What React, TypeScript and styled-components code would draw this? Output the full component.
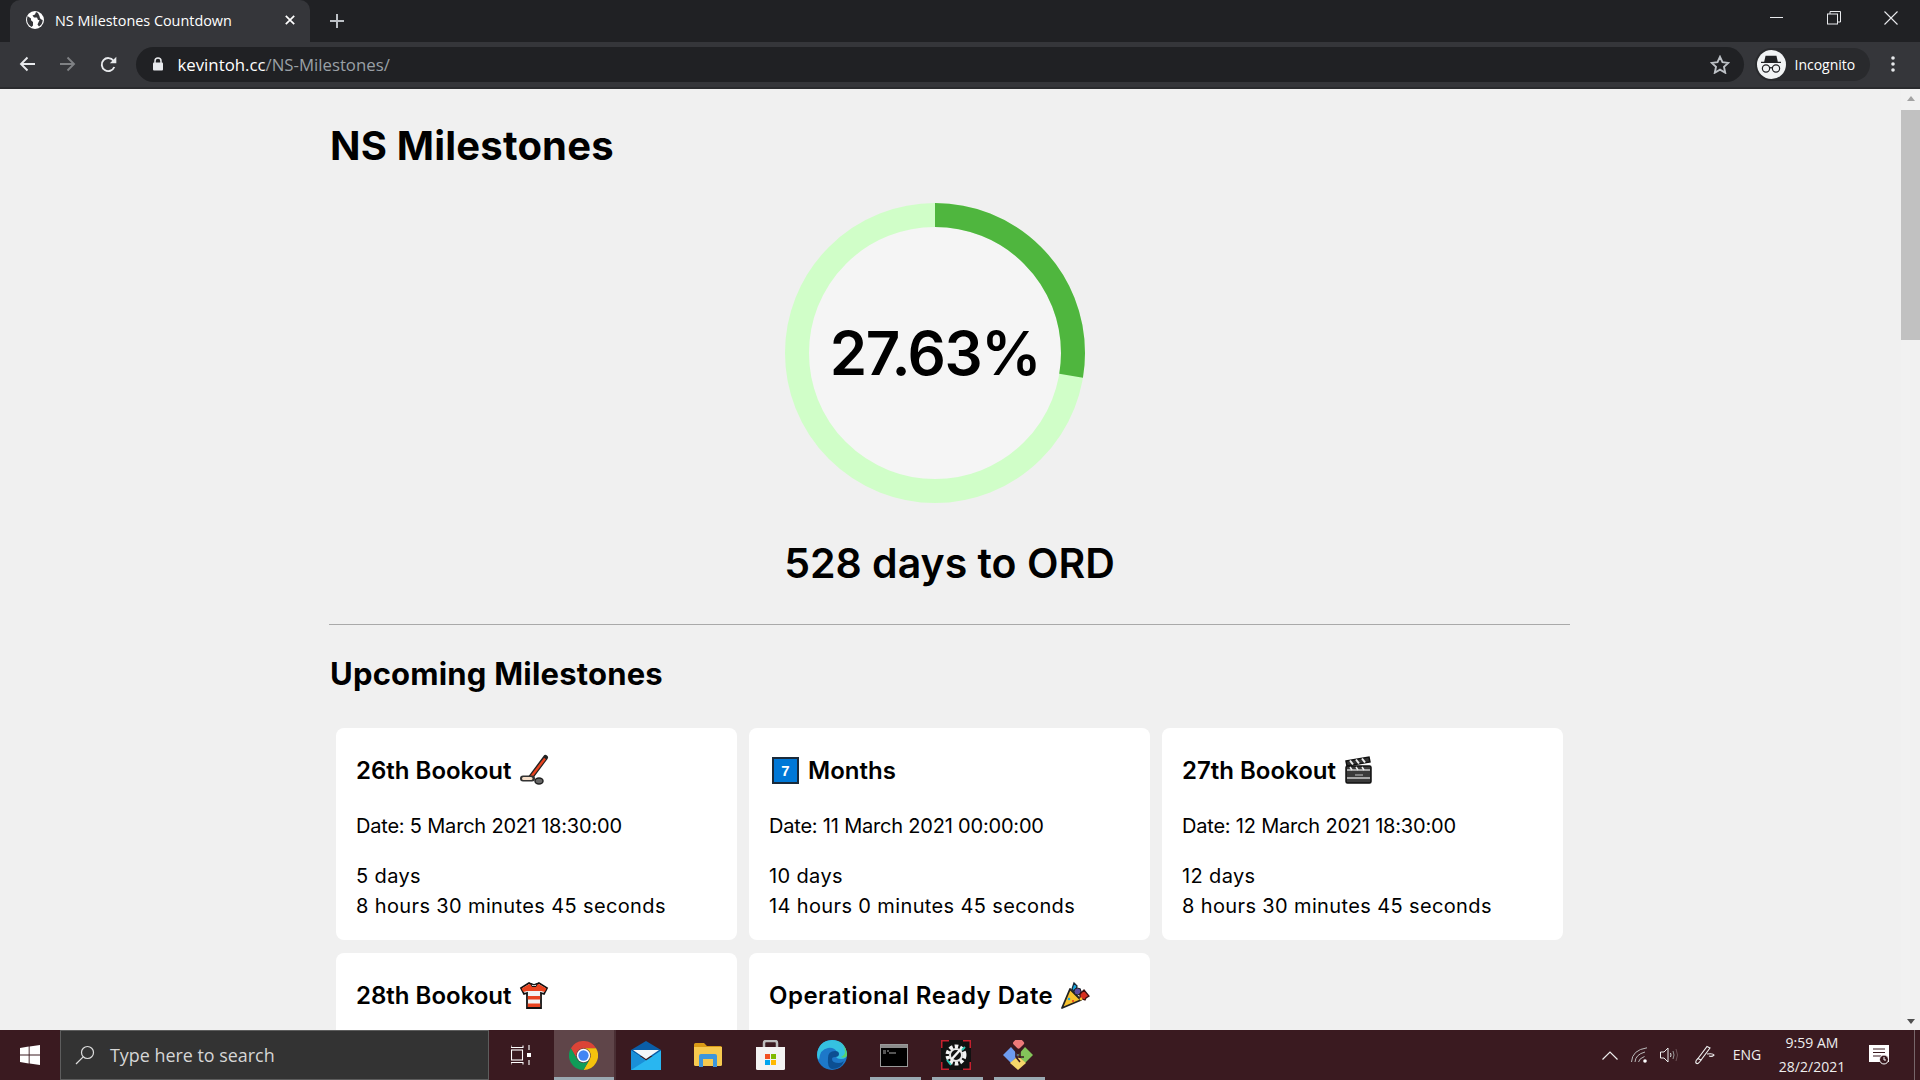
import React from "react";
import styled, { createGlobalStyle } from "styled-components";

const GlobalStyle = createGlobalStyle`
  html, body {
    margin: 0;
    height: 100%;
    overflow: hidden;
    background: #f0f0f0;
  }
  * { box-sizing: border-box; }
`;

const Screen = styled.div`
  width: 1920px;
  height: 1080px;
  display: flex;
  flex-direction: column;
  overflow: hidden;
  font-family: "Inter", "Liberation Sans", sans-serif;
  color: #000;
`;

/* browser chrome */
const TabStrip = styled.div`
  height: 42px;
  flex: none;
  display: flex;
  align-items: stretch;
  background: #202124;
  padding-left: 10px;
`;

const Tab = styled.div`
  width: 300px;
  background: #35363a;
  border-radius: 10px 10px 0 0;
  display: flex;
  align-items: center;
  padding: 0 15px 2px 16px;
  gap: 11px;
  color: #fff;
  font: 400 14.4px "Open Sans", sans-serif;
`;

const TabTitle = styled.span`
  flex: 1;
  white-space: nowrap;
`;

const NewTab = styled.div`
  width: 54px;
  display: flex;
  align-items: center;
  justify-content: center;
`;

const WindowControls = styled.div`
  margin-left: auto;
  display: flex;
  align-items: flex-start;
  padding-top: 11px;
`;

const WindowButton = styled.div<{ $w: number }>`
  width: ${(p) => p.$w}px;
  display: flex;
  justify-content: center;
`;

const Toolbar = styled.div`
  height: 47px;
  flex: none;
  display: flex;
  align-items: center;
  background: #35363a;
  border-bottom: 2px solid #2a2b2e;
  padding: 0 0 1px 7px;
`;

const NavButton = styled.div`
  width: 40.5px;
  display: flex;
  justify-content: center;
`;

const Omnibox = styled.div`
  width: 1608px;
  height: 35px;
  margin-left: 7px;
  border-radius: 18px;
  background: #202124;
  display: flex;
  align-items: center;
  padding: 0 14px 0 16px;
  font: 400 16.8px "Open Sans", sans-serif;
  color: #fff;
`;

const Url = styled.span`
  margin-left: 14px;
  flex: 1;
  white-space: nowrap;
`;

const UrlPath = styled.span`
  color: #9aa0a6;
`;

const ProfilePill = styled.div`
  width: 115px;
  height: 33px;
  margin-left: 11px;
  border-radius: 17px;
  background: #292a2d;
  display: flex;
  align-items: center;
  gap: 9px;
  padding-left: 2px;
  color: #fff;
  font: 400 14px "Open Sans", sans-serif;
`;

const Avatar = styled.div`
  width: 29px;
  height: 29px;
  border-radius: 50%;
  background: #f1f3f4;
  display: flex;
  align-items: center;
  justify-content: center;
`;

const Kebab = styled.div`
  width: 46px;
  display: flex;
  justify-content: center;
`;

/* page */
const Viewport = styled.div`
  flex: 1;
  min-height: 0;
  display: flex;
  background: #f0f0f0;
`;

const Main = styled.main`
  flex: 1;
  min-width: 0;
  overflow: hidden;
  padding-left: 329px;
`;

const Content = styled.div`
  width: 1241px;
  display: flex;
  flex-direction: column;
`;

const Title = styled.h1`
  margin: 27px 0 0 1px;
  font-size: 40px;
  line-height: 60px;
  font-weight: 700;
  letter-spacing: 0.2px;
`;

const RingBox = styled.div`
  position: relative;
  width: 300px;
  height: 300px;
  margin: 27px 0 0 456px;
`;

const RingLabel = styled.div`
  position: absolute;
  inset: 0;
  display: flex;
  align-items: center;
  justify-content: center;
  font-size: 60px;
  font-weight: 600;
  letter-spacing: -1.4px;
`;

const DaysLeft = styled.h2`
  margin: 30px 0 0;
  text-align: center;
  font-size: 41px;
  line-height: 60px;
  font-weight: 600;
`;

const Rule = styled.hr`
  width: 100%;
  height: 1px;
  margin: 31px 0 0;
  border: 0;
  background: #a9a9a9;
`;

const SectionTitle = styled.h2`
  margin: 25px 0 0 1px;
  font-size: 31px;
  line-height: 48px;
  font-weight: 700;
  letter-spacing: 0.2px;
`;

const CardGrid = styled.div`
  display: grid;
  grid-template-columns: repeat(3, 401px);
  column-gap: 12px;
  row-gap: 13px;
  margin: 30px 0 0 7px;
`;

const Card = styled.article`
  min-height: 212px;
  padding: 25px 20px 0;
  background: #fff;
  border-radius: 8px;
`;

const CardTitle = styled.h3<{ $track?: number }>`
  margin: 0;
  height: 34px;
  display: flex;
  align-items: center;
  gap: 6px;
  font-size: 24px;
  font-weight: 600;
  white-space: nowrap;
  letter-spacing: ${(p) => p.$track ?? 0}px;
`;

const DateLine = styled.p`
  margin: 24px 0 0;
  font-size: 20px;
  line-height: 30px;
  letter-spacing: -0.2px;
`;

const Remaining = styled.p`
  margin: 20px 0 0;
  font-size: 20px;
  line-height: 30px;
  letter-spacing: 0.37px;
`;

const Keycap = styled.span`
  width: 27px;
  height: 27px;
  margin: 0 3px;
  display: flex;
  align-items: center;
  justify-content: center;
  background: #0078d7;
  border: 2px solid #1a2a3a;
  color: #fff;
  font: 700 15px "Liberation Sans", sans-serif;
`;

const Scrollbar = styled.div`
  width: 19px;
  flex: none;
  display: flex;
  flex-direction: column;
  align-items: center;
  background: #f1f1f1;
`;

const ScrollArrow = styled.div<{ $down?: boolean }>`
  width: 0;
  height: 0;
  margin: ${(p) => (p.$down ? "auto 0 6px" : "7px 0 0")};
  border-left: 4.5px solid transparent;
  border-right: 4.5px solid transparent;
  ${(p) => (p.$down ? "border-top: 5px solid #505050;" : "border-bottom: 5px solid #a3a3a3;")}
`;

const ScrollThumb = styled.div`
  width: 100%;
  height: 230px;
  margin-top: 9px;
  background: #c1c1c1;
`;

/* windows taskbar */
const Taskbar = styled.footer`
  height: 50px;
  flex: none;
  display: flex;
  align-items: stretch;
  background: #3a1a20;
  color: #fff;
`;

const StartButton = styled.div`
  width: 60px;
  display: flex;
  align-items: center;
  justify-content: center;
`;

const SearchBox = styled.div`
  width: 429px;
  display: flex;
  align-items: center;
  gap: 15px;
  padding-left: 14px;
  background: #333;
  border: 1px solid #5d5d5d;
  color: #d6d6d6;
  font: 400 17.9px "Open Sans", sans-serif;
`;

const TaskView = styled.div`
  width: 65px;
  display: flex;
  align-items: center;
  justify-content: center;
  padding-right: 2px;
`;

const AppSlot = styled.div<{ $active?: boolean; $open?: boolean }>`
  position: relative;
  width: 62px;
  display: flex;
  align-items: center;
  justify-content: center;
  padding-right: 2px;
  background: ${(p) => (p.$active ? "#5f4549" : "transparent")};
  ${(p) => (p.$active ? "border-right: 2px solid #4a2f34;" : "")}
  &::after {
    content: "";
    position: absolute;
    left: ${(p) => (p.$active ? 0 : "6px")};
    right: ${(p) => (p.$active ? 0 : "5px")};
    bottom: 0;
    height: 3px;
    background: ${(p) => (p.$open || p.$active ? "#9aa9b2" : "transparent")};
  }
`;

const Tray = styled.div`
  margin-left: auto;
  display: flex;
  align-items: stretch;
`;

const TraySlot = styled.div<{ $w: number }>`
  width: ${(p) => p.$w}px;
  display: flex;
  flex-direction: column;
  align-items: center;
  justify-content: center;
  font: 400 14px/24px "Open Sans", sans-serif;
  color: #eee;
`;

const TrayEdge = styled.div`
  width: 17px;
  display: flex;
  justify-content: center;
  &::before {
    content: "";
    width: 1px;
    margin-left: 5px;
    background: #77666a;
  }
`;

const HockeyEmoji = () => (
  <svg width="32" height="32" viewBox="0 0 32 32">
    <path d="M27.5 3.5 13 23" stroke="#222" strokeWidth="5" strokeLinecap="round" />
    <path d="M27 4.5 13 23" stroke="#e8431f" strokeWidth="2.4" />
    <path d="M14 24.5H5" stroke="#333" strokeWidth="6" strokeLinecap="round" />
    <path d="M13 24.5H5.500" stroke="#f7dfc9" strokeWidth="3" strokeLinecap="round" />
    <ellipse cx="21" cy="27" rx="4" ry="3" fill="#666" stroke="#222" strokeWidth="1.5" />
  </svg>
);

const ClapperEmoji = () => (
  <svg width="32" height="32" viewBox="0 0 32 32">
    <path d="M4 7 27 3l1 5L5 12z" fill="#333" stroke="#111" strokeWidth="1.500" />
    <path d="m8 6.500 3 4M14 5.500l3 4M20 4.500l3 4" stroke="#eee" strokeWidth="2" />
    <rect x="4" y="12" width="25" height="17" rx="1.500" fill="#3a3a3a" stroke="#111" strokeWidth="1.500" />
    <path d="M5 16h23M5 24h23" stroke="#ccc" strokeWidth="1.500" />
    <path d="m8 13 2 3M14 13l2 3M20 13l2 3" stroke="#eee" strokeWidth="1.500" />
    <path d="M13 21h8" stroke="#999" strokeWidth="1.500" />
  </svg>
);

const ShirtEmoji = () => (
  <svg width="32" height="32" viewBox="0 0 32 32">
    <path d="M11 4 3 9l3 6 3-1v15h14V14l3 1 3-6-8-5q-5 4-10 0z" fill="#f2f2f2" stroke="#111" strokeWidth="1.800" />
    <path d="M11.500 5q4.500 3.500 9 0l8 4.500-1.800 3.500-3.700-1H9l-3.700 1-1.800-3.500z" fill="#e8431f" />
    <path d="M9.800 17h12.400v3.500H9.800zM9.800 24.500h12.400V28H9.800z" fill="#e8431f" />
    <path d="M13 4.500q3 3 6 0l-1 3h-4z" fill="#fff" stroke="#111" strokeWidth="1" />
  </svg>
);

const PopperEmoji = () => (
  <svg width="32" height="32" viewBox="0 0 32 32">
    <path d="M3 29 11 10l11 11z" fill="#f8c22e" stroke="#222" strokeWidth="1.800" strokeLinejoin="round" />
    <circle cx="10" cy="20" r="1.300" fill="#19a8e0" />
    <circle cx="14" cy="22" r="1.100" fill="#e8431f" />
    <path d="m15 4 3 3-1 4 4-1 1 3-5 2-4-5z" fill="#19a8e0" stroke="#1a2a3a" strokeWidth="1.300" />
    <circle cx="18.500" cy="12.500" r="3.500" fill="#5b4aa0" stroke="#222" strokeWidth="1" />
    <path d="m21 15 4-4 5 6-3 2-1 2-5-2z" fill="#d6301f" stroke="#3a1010" strokeWidth="1.300" />
    <circle cx="22" cy="20" r="1.400" fill="#f8c22e" />
  </svg>
);

const GlobeIcon = () => (
  <svg width="18" height="18" viewBox="0 0 18 18">
    <circle cx="9" cy="9" r="9" fill="#fff" />
    <path d="M1.500 5 5 7.500v1.800l2 1.700v3.500L5.500 16Q1 13 1 8.500zM10 1l-1 2.500L6.500 4.500 8 6.500h3l1 2.500h1.500l-2 4.500 1.500 2q3.500-2 3.700-6.500-3-.5-3.200-4L12 2z" fill="#35363a" />
  </svg>
);

const CloseSmall = () => (
  <svg width="10" height="10" viewBox="0 0 10 10">
    <path d="m.8.8 8.400 8.400M9.200.8.800 9.200" stroke="#fff" strokeWidth="1.700" />
  </svg>
);

const PlusIcon = () => (
  <svg width="14" height="14" viewBox="0 0 14 14">
    <path d="M7 0v14M0 7h14" stroke="#bdc1c6" strokeWidth="2" />
  </svg>
);

const ArrowIcon = ({ color, flip }: { color: string; flip?: boolean }) => (
  <svg width="16" height="16" viewBox="0 0 16 16" transform={flip ? "scale(-1 1)" : undefined}>
    <path d="M16 8H2M8.500 1.500 2 8l6.500 6.500" fill="none" stroke={color} strokeWidth="1.900" />
  </svg>
);

const ReloadIcon = () => (
  <svg width="17" height="17" viewBox="0 0 17 17">
    <path d="M14.300 11a6.500 6.500 0 1 1-.8-6.300" fill="none" stroke="#e8eaed" strokeWidth="1.900" />
    <path d="M16.300 0.800v6.500H9.800z" fill="#e8eaed" />
  </svg>
);

const LockIcon = () => (
  <svg width="12" height="14" viewBox="0 0 12 14">
    <path d="M3 6V4a3 3 0 0 1 6 0v2" fill="none" stroke="#e8eaed" strokeWidth="1.500" />
    <rect x="1" y="5.500" width="10" height="8" rx="1" fill="#e8eaed" />
  </svg>
);

const StarIcon = () => (
  <svg width="20" height="19" viewBox="0 0 20 19">
    <path d="m10 1.800 2.500 5.400 5.800.7-4.300 4 1.200 5.800-5.200-3-5.200 3L6 11.900l-4.300-4 5.800-.7z" fill="none" stroke="#bdc1c6" strokeWidth="1.900" />
  </svg>
);

const IncognitoIcon = () => (
  <svg width="22" height="20" viewBox="0 0 24 22">
    <path d="M6 2h12l1.500 6.500H23V10H1V8.500h3.500z" fill="#202124" />
    <circle cx="6.500" cy="16" r="4" fill="none" stroke="#202124" strokeWidth="1.300" />
    <circle cx="17.500" cy="16" r="4" fill="none" stroke="#202124" strokeWidth="1.300" />
    <path d="M10.500 15.500q1.500-1 3 0" fill="none" stroke="#202124" strokeWidth="1.300" />
  </svg>
);

const KebabIcon = () => (
  <svg width="4" height="16" viewBox="0 0 4 16" fill="#e8eaed">
    <circle cx="2" cy="2" r="1.800" />
    <circle cx="2" cy="8" r="1.800" />
    <circle cx="2" cy="14" r="1.800" />
  </svg>
);

const MinimizeIcon = () => (
  <svg width="14" height="14" viewBox="0 0 14 14">
    <path d="M0 6.500h13" stroke="#e8eaed" strokeWidth="1" />
  </svg>
);

const RestoreIcon = () => (
  <svg width="14" height="14" viewBox="0 0 14 14" fill="none" stroke="#e8eaed">
    <rect x=".5" y="3" width="10" height="10" />
    <path d="M3 3V.5h10.500V11H10.500" />
  </svg>
);

const CloseWindowIcon = () => (
  <svg width="14" height="14" viewBox="0 0 14 14">
    <path d="m.5.500 13 13M13.500.500l-13 13" stroke="#e8eaed" strokeWidth="1.100" />
  </svg>
);

const WindowsIcon = () => (
  <svg width="20" height="20" viewBox="0 0 20 20" fill="#fff">
    <path d="M0 2.900 8.700 1.600v7.900H0zM9.600 1.500 20 0v9.500H9.600zM0 10.500h8.700v7.900L0 17.100zM9.600 10.500H20V20L9.600 18.500z" />
  </svg>
);

const SearchIcon = () => (
  <svg width="20" height="20" viewBox="0 0 20 20" fill="none" stroke="#ddd" strokeWidth="1.200">
    <circle cx="12.500" cy="7.500" r="6" />
    <path d="M8.200 11.800 1 19" />
  </svg>
);

const TaskViewIcon = () => (
  <svg width="20" height="20" viewBox="0 0 20 20" fill="none" stroke="#fff" strokeWidth="1.100">
    <path d="M0 .5v2h12v-2M0 19.500v-2h12v2" />
    <rect x=".5" y="5" width="11" height="10" />
    <path d="M18 0v5M18 15v5" />
    <rect x="16" y="8" width="4" height="4" fill="#fff" stroke="none" />
  </svg>
);

const ChromeLogo = () => (
  <svg width="29" height="29" viewBox="0 0 48 48">
    <path d="M24 12h20.800A24 24 0 0 0 3.200 12l10.400 18A12 12 0 0 1 24 12z" fill="#db4437" />
    <path d="M24 12h20.800A24 24 0 0 1 24 48l10.400-18A12 12 0 0 0 24 12z" fill="#f4c20d" />
    <path d="M3.200 12A24 24 0 0 0 24 48l10.400-18a12 12 0 0 1-20.800 0z" fill="#0f9d58" />
    <circle cx="24" cy="24" r="11" fill="#fff" />
    <circle cx="24" cy="24" r="8.500" fill="#4285f4" />
  </svg>
);

const MailIcon = () => (
  <svg width="30" height="29" viewBox="0 0 30 29">
    <path d="M0 9 15 0l15 9v6H0z" fill="#0a5ea8" />
    <path d="M2 9h26L15 18z" fill="#f4f6f8" />
    <path d="M0 9.500v19.500h30V9.500L15 19.500z" fill="#29b6f0" />
    <path d="M0 29V9.500l15 10z" fill="#1a8fd8" />
  </svg>
);

const FolderIcon = () => (
  <svg width="28" height="24" viewBox="0 0 28 24">
    <path d="M0 1.500Q0 0 1.500 0H10l3 3h13.500Q28 3 28 4.500V6H0z" fill="#d99a16" />
    <path d="M0 4h28v17.500Q28 23 26.500 23h-25Q0 23 0 21.500z" fill="#f6c94f" />
    <path d="M5 24V13q0-2 2-2h14q2 0 2 2v11h-4v-8H9v8z" fill="#3d96dc" />
  </svg>
);

const StoreIcon = () => (
  <svg width="29" height="30" viewBox="0 0 29 30">
    <path d="M8 8V3q0-2 2-2h9q2 0 2 2v5" fill="none" stroke="#bcbcbc" strokeWidth="2.500" />
    <path d="M0 7h29v21.500q0 1.500-1.500 1.500h-26Q0 30 0 28.500z" fill="#f3f3f3" />
    <rect x="9" y="14" width="5" height="5" fill="#f25022" />
    <rect x="15" y="14" width="5" height="5" fill="#7fba00" />
    <rect x="9" y="20" width="5" height="5" fill="#00a4ef" />
    <rect x="15" y="20" width="5" height="5" fill="#ffb900" />
  </svg>
);

const EdgeIcon = () => (
  <svg width="30" height="30" viewBox="0 0 30 30">
    <circle cx="15" cy="15" r="15" fill="#1d78c9" />
    <path d="M0 15Q1 1 15 0q13 0 15 14 0 5-6 5-5 0-5-3 2-2 1-4-3-5-9-4Q3 9 2 20q-2-2-2-5z" fill="#35c1e1" />
    <path d="M30 14q-1-11-13-13 11 2 11 11 0 3-4 5 6 2 6-3z" fill="#58d36c" />
    <path d="M11 18q0-7 7-7 4 0 4 3 0 3-4 3-3 0-3 2 0 4 7 4 3 0 5-2-3 8-12 8-5-1-4-11z" fill="#0c4f92" />
  </svg>
);

const TerminalIcon = () => (
  <svg width="28" height="23" viewBox="0 0 28 23">
    <rect x=".5" y=".5" width="27" height="22" fill="#000" stroke="#9a9a9a" />
    <rect x="1" y="1" width="26" height="3" fill="#8b8b8b" />
    <path d="M3 7h3M7 7h2M9 9h7M3 9h3" stroke="#aaa" strokeWidth="1" />
  </svg>
);

const GearIcon = () => (
  <svg width="30" height="30" viewBox="0 0 30 30">
    <rect width="30" height="30" fill="#111" />
    <path d="M0 8V0h8M22 0h8v8M30 22v8h-8M8 30H0v-8" fill="none" stroke="#c5202e" strokeWidth="3" />
    <circle cx="15" cy="15" r="8.500" fill="none" stroke="#f3f3f3" strokeWidth="4" strokeDasharray="3.500 2" />
    <circle cx="15" cy="15" r="6" fill="none" stroke="#e8e8e8" strokeWidth="2" />
    <path d="m10 20 9-10" stroke="#f3f3f3" strokeWidth="2.500" />
    <path d="m6 20 4 5M24 7l-3 3" stroke="#2fc7b4" strokeWidth="2" />
  </svg>
);

const GitAppIcon = () => (
  <svg width="30" height="30" viewBox="0 0 30 30">
    <rect x="12.500" y="0" width="9" height="9" rx="2" transform="rotate(45 17 4.500) translate(-2 0)" fill="#ee7a7a" />
    <path d="M8 7 15 15 8 23 0 15z" fill="#6e9cf0" />
    <path d="M22 7 30 15 22 23 15 15z" fill="#83c55a" />
    <path d="M15 16 23 23 15 30 7 23z" fill="#f5d66a" />
    <path d="M13 8v9M13 17l4 5M17 11v7M13 17h8" stroke="#3a1a20" strokeWidth="1.600" />
  </svg>
);

const ChevronIcon = () => (
  <svg width="16" height="9" viewBox="0 0 16 9">
    <path d="m.5 8.500 7.500-7.500 7.500 7.500" fill="none" stroke="#eee" strokeWidth="1.200" />
  </svg>
);

const WifiIcon = () => (
  <svg width="18" height="16" viewBox="0 0 18 16" fill="none" stroke="#bbb" strokeWidth="1">
    <path d="M.5 15Q1 3 16 .8M4 15q.5-7.500 10-10M7.500 15q.5-3.500 6-5.500" />
    <circle cx="14" cy="14" r="1.800" fill="#fff" stroke="none" />
  </svg>
);

const SpeakerIcon = () => (
  <svg width="20" height="16" viewBox="0 0 20 16" fill="none">
    <path d="M.5 5H4L8 1v14l-4-4H.5z" stroke="#eee" />
    <path d="M10.500 6q1 2 0 4" stroke="#ddd" />
    <path d="M13 4q2 4 0 8" stroke="#999" />
    <path d="M16 2q3 6 0 12" stroke="#6d5357" />
  </svg>
);

const PenIcon = () => (
  <svg width="20" height="20" viewBox="0 0 20 20" fill="none" stroke="#eee" strokeWidth="1.100">
    <path d="M12 1.500 15 3 6 15 3 13.500z" />
    <path d="M3 13.500Q0 16 1 18q2 2 5-3" />
    <path d="M12 9q6-1 7 1-2 2-5 1" />
  </svg>
);

const NotificationIcon = () => (
  <svg width="21" height="20" viewBox="0 0 21 20">
    <path d="M0 0h20v17H0z" fill="#fff" />
    <path d="M4 4h12M4 7.500h12M4 11h8" stroke="#3a1a20" strokeWidth="1.200" />
    <circle cx="15" cy="14.500" r="4.500" fill="#3a1a20" stroke="#fff" strokeWidth="1" />
    <path d="M15 12v3h2" stroke="#fff" strokeWidth="1" fill="none" />
  </svg>
);

const ProgressRing = ({ percent }: { percent: number }) => {
  const radius = 138;
  const circumference = 2 * Math.PI * radius;
  return (
    <svg width="300" height="300" viewBox="0 0 300 300">
      <circle cx="150" cy="150" r={radius} fill="#f5f5f5" stroke="#d0fec8" strokeWidth="24" />
      <circle
        cx="150"
        cy="150"
        r={radius}
        fill="none"
        stroke="#4fb63e"
        strokeWidth="24"
        strokeDasharray={`${(circumference * percent) / 100} ${circumference}`}
        transform="rotate(-90 150 150)"
      />
    </svg>
  );
};

const App: React.FC = () => {
  return (
    <Screen>
      <GlobalStyle />
      <TabStrip>
        <Tab>
          <GlobeIcon />
          <TabTitle>NS Milestones Countdown</TabTitle>
          <CloseSmall />
        </Tab>
        <NewTab>
          <PlusIcon />
        </NewTab>
        <WindowControls>
          <WindowButton $w={56}>
            <MinimizeIcon />
          </WindowButton>
          <WindowButton $w={57}>
            <RestoreIcon />
          </WindowButton>
          <WindowButton $w={58}>
            <CloseWindowIcon />
          </WindowButton>
        </WindowControls>
      </TabStrip>
      <Toolbar>
        <NavButton>
          <ArrowIcon color="#e8eaed" />
        </NavButton>
        <NavButton>
          <ArrowIcon color="#7f8184" flip />
        </NavButton>
        <NavButton>
          <ReloadIcon />
        </NavButton>
        <Omnibox>
          <LockIcon />
          <Url>
            kevintoh.cc<UrlPath>/NS-Milestones/</UrlPath>
          </Url>
          <StarIcon />
        </Omnibox>
        <ProfilePill>
          <Avatar>
            <IncognitoIcon />
          </Avatar>
          Incognito
        </ProfilePill>
        <Kebab>
          <KebabIcon />
        </Kebab>
      </Toolbar>
      <Viewport>
        <Main>
          <Content>
            <Title>NS Milestones</Title>
            <RingBox>
              <ProgressRing percent={27.63} />
              <RingLabel>27.63%</RingLabel>
            </RingBox>
            <DaysLeft>528 days to ORD</DaysLeft>
            <Rule />
            <SectionTitle>Upcoming Milestones</SectionTitle>
            <CardGrid>
              <Card>
                <CardTitle>
                  26th Bookout <HockeyEmoji />
                </CardTitle>
                <DateLine>Date: 5 March 2021 18:30:00</DateLine>
                <Remaining>
                  5 days
                  <br />8 hours 30 minutes 45 seconds
                </Remaining>
              </Card>
              <Card>
                <CardTitle>
                  <Keycap>7</Keycap> Months
                </CardTitle>
                <DateLine>Date: 11 March 2021 00:00:00</DateLine>
                <Remaining>
                  10 days
                  <br />
                  14 hours 0 minutes 45 seconds
                </Remaining>
              </Card>
              <Card>
                <CardTitle>
                  27th Bookout <ClapperEmoji />
                </CardTitle>
                <DateLine>Date: 12 March 2021 18:30:00</DateLine>
                <Remaining>
                  12 days
                  <br />8 hours 30 minutes 45 seconds
                </Remaining>
              </Card>
              <Card>
                <CardTitle>
                  28th Bookout <ShirtEmoji />
                </CardTitle>
              </Card>
              <Card>
                <CardTitle $track={0.5}>
                  Operational Ready Date <PopperEmoji />
                </CardTitle>
              </Card>
            </CardGrid>
          </Content>
        </Main>
        <Scrollbar>
          <ScrollArrow />
          <ScrollThumb />
          <ScrollArrow $down />
        </Scrollbar>
      </Viewport>
      <Taskbar>
        <StartButton>
          <WindowsIcon />
        </StartButton>
        <SearchBox>
          <SearchIcon />
          Type here to search
        </SearchBox>
        <TaskView>
          <TaskViewIcon />
        </TaskView>
        <AppSlot $active>
          <ChromeLogo />
        </AppSlot>
        <AppSlot>
          <MailIcon />
        </AppSlot>
        <AppSlot>
          <FolderIcon />
        </AppSlot>
        <AppSlot>
          <StoreIcon />
        </AppSlot>
        <AppSlot>
          <EdgeIcon />
        </AppSlot>
        <AppSlot $open>
          <TerminalIcon />
        </AppSlot>
        <AppSlot $open>
          <GearIcon />
        </AppSlot>
        <AppSlot $open>
          <GitAppIcon />
        </AppSlot>
        <Tray>
          <TraySlot $w={30}>
            <ChevronIcon />
          </TraySlot>
          <TraySlot $w={30}>
            <WifiIcon />
          </TraySlot>
          <TraySlot $w={30}>
            <SpeakerIcon />
          </TraySlot>
          <TraySlot $w={40}>
            <PenIcon />
          </TraySlot>
          <TraySlot $w={44}>ENG</TraySlot>
          <TraySlot $w={86}>
            <span>9:59 AM</span>
            <span>28/2/2021</span>
          </TraySlot>
          <TraySlot $w={48}>
            <NotificationIcon />
          </TraySlot>
          <TrayEdge />
        </Tray>
      </Taskbar>
    </Screen>
  );
};

export default App;
